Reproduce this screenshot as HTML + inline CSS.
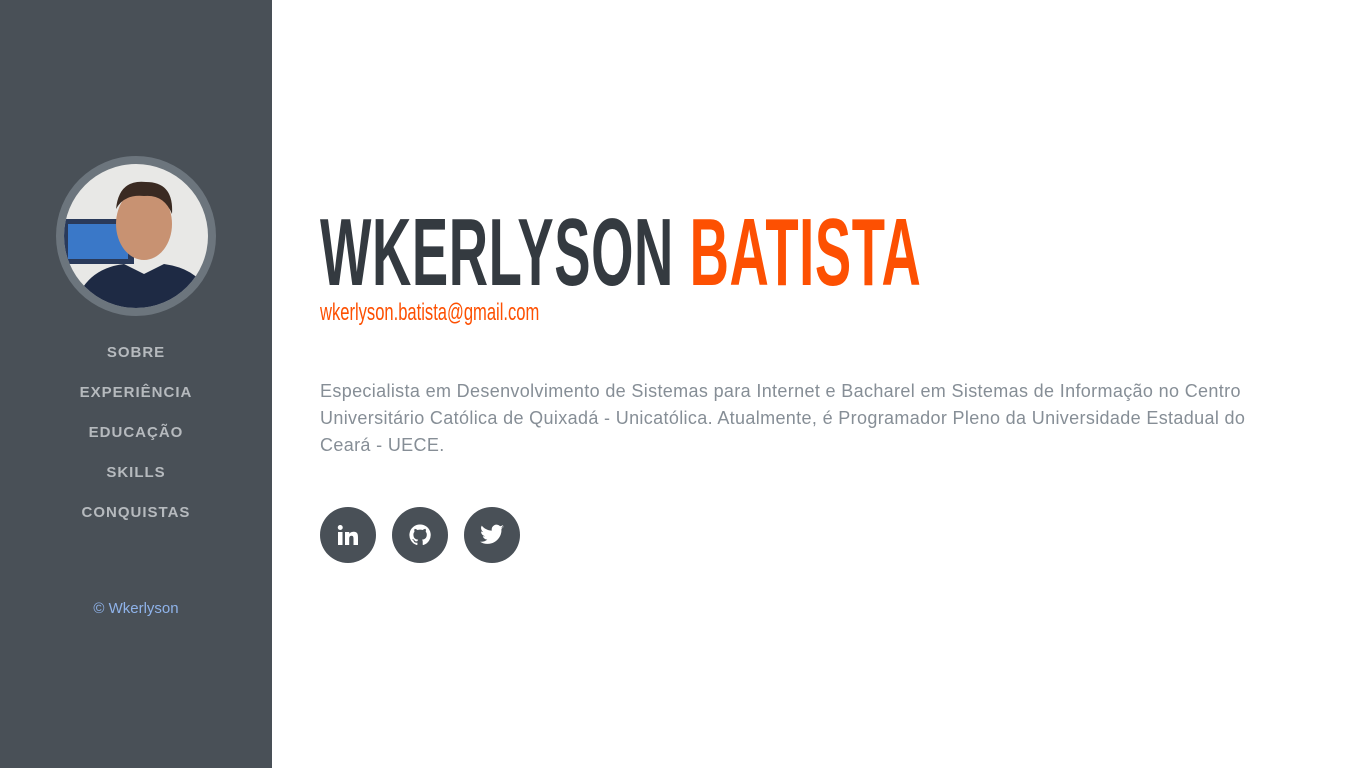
<!DOCTYPE html>
<html><head><meta charset="utf-8">
<style>
*{margin:0;padding:0;box-sizing:border-box}
body{width:1354px;height:768px;overflow:hidden;background:#fff;font-family:"Liberation Sans",sans-serif;position:relative}
.side{position:absolute;left:0;top:0;width:272px;height:768px;background:#495057}
.av{position:absolute;left:56px;top:156px;width:160px;height:160px;border-radius:50%;background:#6c757d;padding:8px}
.av svg{display:block;border-radius:50%}
.nav{position:absolute;left:0;width:272px;text-align:center;color:#b6babe;font-weight:bold;font-size:15px;letter-spacing:1px}
.foot{position:absolute;left:0;width:272px;top:600px;text-align:center;color:#8fb3ea;font-size:15px}
h1{position:absolute;left:320px;top:203px;font-size:96px;font-weight:bold;color:#343a40;white-space:nowrap;transform:scaleX(0.567);transform-origin:left top;line-height:100px;letter-spacing:1px}
h1 span{color:#fd5002}
.mail{position:absolute;left:320px;top:299px;font-size:24px;color:#fd5002;white-space:nowrap;transform:scaleX(0.69);transform-origin:left top}
p{position:absolute;left:320px;top:378px;width:960px;font-size:18px;line-height:27px;color:#868e96;letter-spacing:0.35px}
.so{position:absolute;top:507px;width:56px;height:56px;border-radius:50%;background:#495057;display:flex;align-items:center;justify-content:center}
</style></head><body>
<div class="side">
<div class="av"><svg width="144" height="144" viewBox="0 0 144 144">
<rect width="144" height="144" fill="#e8e8e6"/>
<rect x="0" y="55" width="70" height="45" fill="#2a3a5a"/>
<rect x="4" y="60" width="60" height="35" fill="#3a78c8"/>
<ellipse cx="80" cy="60" rx="28" ry="36" fill="#c89272"/>
<path d="M52 45 Q55 15 82 18 Q110 18 108 50 Q100 30 80 32 Q60 30 52 45Z" fill="#3a2a22"/>
<path d="M10 144 Q20 105 60 100 L80 110 L100 100 Q135 105 144 130 L144 144Z" fill="#1e2a44"/>
</svg></div>
<div class="nav" style="top:344px">SOBRE</div>
<div class="nav" style="top:384px">EXPERIÊNCIA</div>
<div class="nav" style="top:424px">EDUCAÇÃO</div>
<div class="nav" style="top:464px">SKILLS</div>
<div class="nav" style="top:504px">CONQUISTAS</div>
<div class="foot">© Wkerlyson</div>
</div>
<h1>WKERLYSON <span>BATISTA</span></h1>
<div class="mail">wkerlyson.batista@gmail.com</div>
<p>Especialista em Desenvolvimento de Sistemas para Internet e Bacharel em Sistemas de Informação no Centro Universitário Católica de Quixadá - Unicatólica. Atualmente, é Programador Pleno da Universidade Estadual do Ceará - UECE.</p>
<div class="so" style="left:320px"><svg width="24" height="24" viewBox="0 0 24 24" fill="#fff"><rect x="2" y="9" width="4.5" height="13"/><circle cx="4.25" cy="4.5" r="2.5"/><path d="M9 9h4.3v1.9c.6-1.1 2-2.2 4.2-2.2 4.4 0 4.5 2.9 4.5 6.6V22h-4.5v-6c0-1.5 0-3.3-2-3.3s-2.3 1.6-2.3 3.2V22H9z"/></svg></div>
<div class="so" style="left:392px"><svg width="24" height="24" viewBox="0 0 24 24" fill="#fff"><path d="M12 1.5A10.5 10.5 0 0 0 8.7 22c.5.1.7-.2.7-.5v-1.9c-2.9.6-3.500-1.3-3.5-1.3-.5-1.2-1.2-1.5-1.2-1.5-1-.7.1-.7.1-.7 1 .1 1.6 1.1 1.6 1.100.9 1.6 2.5 1.1 3.1.9.1-.7.4-1.1.7-1.4-2.3-.3-4.8-1.2-4.8-5.2 0-1.1.4-2.1 1.1-2.8-.1-.3-.5-1.3.1-2.8 0 0 .9-.3 2.9 1.1a10 10 0 0 1 5.2 0c2-1.4 2.9-1.1 2.9-1.1.6 1.5.2 2.5.1 2.8.7.7 1.1 1.7 1.1 2.8 0 4-2.5 4.9-4.8 5.2.4.3.7 1 .7 1.9v2.9c0 .3.2.6.7.5A10.5 10.5 0 0 0 12 1.5z"/></svg></div>
<div class="so" style="left:464px"><svg width="26" height="26" viewBox="0 0 24 24" fill="#fff"><path d="M23 4.6c-.8.4-1.7.6-2.6.7.9-.6 1.6-1.4 2-2.5-.9.5-1.9.9-2.9 1.1a4.5 4.5 0 0 0-7.7 4.1C8 7.8 4.7 6 2.5 3.3a4.5 4.5 0 0 0 1.4 6c-.7 0-1.4-.2-2-.6 0 2.2 1.5 4 3.6 4.4-.7.2-1.4.2-2 .1.6 1.8 2.200 3.1 4.2 3.1A9 9 0 0 1 1 18.2 12.8 12.8 0 0 0 20.7 6.8V6.2c.9-.6 1.6-1.4 2.3-2.3z"/></svg></div>
</body></html>
